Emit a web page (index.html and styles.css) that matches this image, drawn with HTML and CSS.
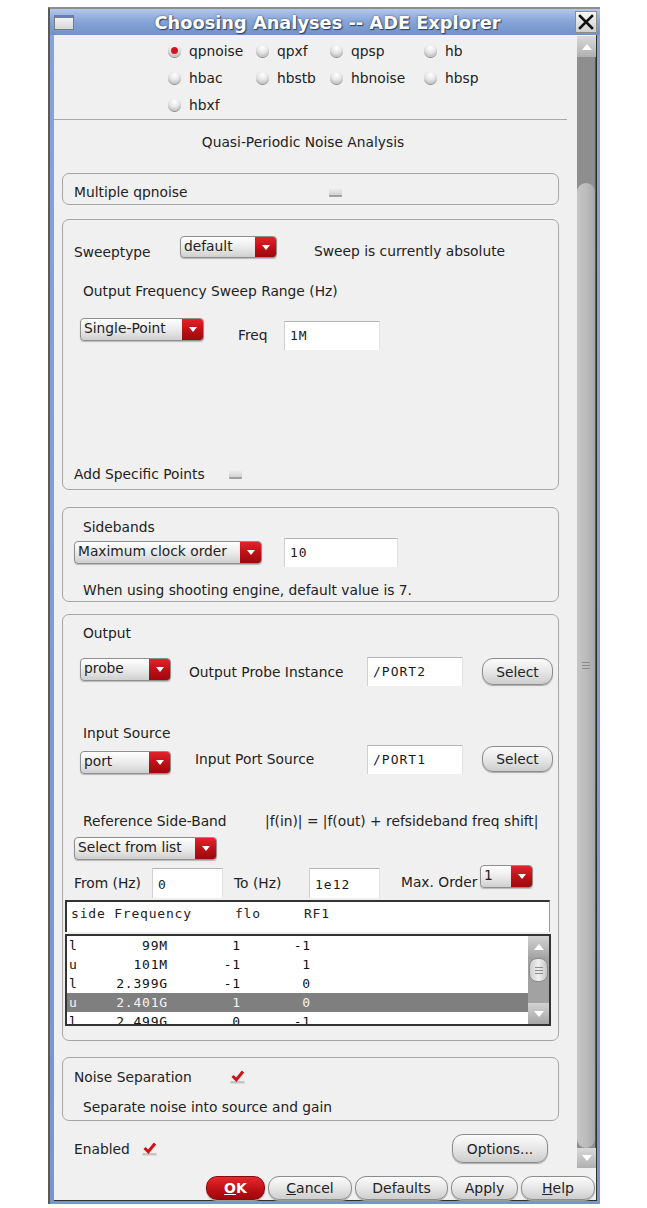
FILE: index.html
```html
<!DOCTYPE html>
<html>
<head>
<meta charset="utf-8">
<link rel="stylesheet" href="styles.css">
</head>
<body>
<div class="window">
  <div class="titlebar">
    <span class="win-icon"></span>
    <span class="title">Choosing Analyses -- ADE Explorer</span>
    <span class="close"><svg width="20" height="20" viewBox="0 0 20 20"><path d="M4 4 L16 16 M16 4 L4 16" stroke="#111" stroke-width="2.6" stroke-linecap="square"/></svg></span>
  </div>
  <div class="client">
    <div class="scrollarea">
      <div class="pane">
        <div class="radios">
          <label class="radio"><span class="rb on"></span>qpnoise</label>
          <label class="radio"><span class="rb"></span>qpxf</label>
          <label class="radio"><span class="rb"></span>qpsp</label>
          <label class="radio"><span class="rb"></span>hb</label>
          <label class="radio"><span class="rb"></span>hbac</label>
          <label class="radio"><span class="rb"></span>hbstb</label>
          <label class="radio"><span class="rb"></span>hbnoise</label>
          <label class="radio"><span class="rb"></span>hbsp</label>
          <label class="radio"><span class="rb"></span>hbxf</label>
        </div>
        <div class="sep"></div>
        <div class="heading">Quasi-Periodic Noise Analysis</div>

        <div class="group g1">
          <span class="lbl w-mq">Multiple qpnoise</span>
          <span class="cb"></span>
        </div>

        <div class="group g2">
          <div class="row r-sweep">
            <span class="lbl w-sweep">Sweeptype</span>
            <div class="combo c-default"><span class="ctext">default</span><span class="cbtn"></span></div>
            <span class="lbl sweep-note">Sweep is currently absolute</span>
          </div>
          <div class="lbl sub r-range">Output Frequency Sweep Range (Hz)</div>
          <div class="row r-freq">
            <div class="combo c-single"><span class="ctext">Single-Point</span><span class="cbtn"></span></div>
            <span class="lbl freq-lbl">Freq</span>
            <div class="field f-freq">1M</div>
          </div>
          <div class="row r-add">
            <span class="lbl w-add">Add Specific Points</span>
            <span class="cb"></span>
          </div>
        </div>

        <div class="group g3">
          <div class="lbl sub r-side">Sidebands</div>
          <div class="row r-max">
            <div class="combo c-max"><span class="ctext">Maximum clock order</span><span class="cbtn"></span></div>
            <div class="field f-max">10</div>
          </div>
          <div class="lbl sub r-when">When using shooting engine, default value is 7.</div>
        </div>

        <div class="group g4">
          <div class="lbl sub r-out">Output</div>
          <div class="row r-probe">
            <div class="combo c-small c-probe"><span class="ctext">probe</span><span class="cbtn"></span></div>
            <span class="lbl w-probe">Output Probe Instance</span>
            <div class="field f-port">/PORT2</div>
            <div class="btn b-select">Select</div>
          </div>
          <div class="lbl sub r-in">Input Source</div>
          <div class="row r-port">
            <div class="combo c-small c-port"><span class="ctext">port</span><span class="cbtn"></span></div>
            <span class="lbl w-portsrc">Input Port Source</span>
            <div class="field f-port">/PORT1</div>
            <div class="btn b-select b-sel2">Select</div>
          </div>
          <div class="row r-ref">
            <span class="lbl w-ref">Reference Side-Band</span>
            <span class="lbl">|f(in)| = |f(out) + refsideband freq shift|</span>
          </div>
          <div class="combo c-list"><span class="ctext">Select from list</span><span class="cbtn"></span></div>
          <div class="row r-range2">
            <span class="lbl w-from">From (Hz)</span>
            <div class="field f-num">0</div>
            <span class="lbl w-to">To (Hz)</span>
            <div class="field f-num">1e12</div>
            <span class="lbl w-ord">Max. Order</span>
            <div class="combo c-ord"><span class="ctext">1</span><span class="cbtn"></span></div>
          </div>
          <div class="thead">side Frequency     flo     RF1</div>
          <div class="list">
            <div class="rows">
              <div class="trow"><span>l</span><span>99M</span><span>1</span><span>-1</span></div>
              <div class="trow"><span>u</span><span>101M</span><span>-1</span><span>1</span></div>
              <div class="trow"><span>l</span><span>2.399G</span><span>-1</span><span>0</span></div>
              <div class="trow sel"><span>u</span><span>2.401G</span><span>1</span><span>0</span></div>
              <div class="trow"><span>l</span><span>2.499G</span><span>0</span><span>-1</span></div>
            </div>
            <div class="lscroll">
              <div class="lbtn up"></div>
              <div class="ltrack"><div class="lthumb"><span></span><span></span><span></span></div></div>
              <div class="lbtn down"></div>
            </div>
          </div>
        </div>

        <div class="group g5">
          <div class="row r-noise">
            <span class="lbl w-noise">Noise Separation</span>
            <span class="ck"><svg width="15" height="14" viewBox="0 0 15 14"><rect x="0.5" y="11" width="14" height="2.5" fill="#c4c4c4"/><path d="M2.5 6 L6.3 9.8 L13 1.5" fill="none" stroke="#d0121a" stroke-width="3"/></svg></span>
          </div>
          <div class="lbl sub r-sep">Separate noise into source and gain</div>
        </div>

        <div class="row r-enabled">
          <span class="lbl w-en">Enabled</span>
          <span class="ck"><svg width="15" height="14" viewBox="0 0 15 14"><rect x="0.5" y="11" width="14" height="2.5" fill="#c4c4c4"/><path d="M2.5 6 L6.3 9.8 L13 1.5" fill="none" stroke="#d0121a" stroke-width="3"/></svg></span>
          <div class="btn b-options">Options...</div>
        </div>
      </div>
      <div class="vscroll">
        <div class="vbtn up"></div>
        <div class="vtrack"><div class="vthumb"><span></span><span></span><span></span></div></div>
        <div class="vbtn down"></div>
      </div>
    </div>
    <div class="buttonbar">
      <div class="btn bb b-ok"><u>O</u>K</div>
      <div class="btn bb b-cancel"><u>C</u>ancel</div>
      <div class="btn bb b-defaults">Defaults</div>
      <div class="btn bb b-apply">Apply</div>
      <div class="btn bb b-help"><u>H</u>elp</div>
    </div>
  </div>
</div>
</body>
</html>
```

FILE: styles.css
```css
* { box-sizing: border-box; }
html, body { margin: 0; padding: 0; background: #ffffff; }
body { font-family: "DejaVu Sans", sans-serif; font-size: 13.8px; color: #222222; }

.window {
  margin: 7px 0 0 48px;
  width: 552px;
  border-top: 2px solid #8e8e8e;
  border-left: 2px solid #5a5a5a;
  background: linear-gradient(#86a4d6, #7896cc);
  padding-bottom: 3px;
}
.titlebar {
  height: 26px;
  display: flex;
  align-items: center;
  background: linear-gradient(#b3c8ea, #88a6d8 45%, #7092ca);
  position: relative;
}
.win-icon {
  width: 20px; height: 15px; margin-left: 4px;
  border: 1px solid #7a7a7a;
  border-top: 3px solid #6c7fa8;
  background: linear-gradient(#f2f2f2, #d6d6d6);
}
.title {
  flex: 1;
  text-align: center;
  color: #fff;
  font-weight: bold;
  font-size: 17.8px;
  text-shadow: 1px 1px 1px #2e3f60, 0 0 2px #3b4e76;
  padding-left: 6px;
}
.close {
  width: 22px; height: 22px; margin-right: 3px;
  border: 1px solid #8d8d8d;
  background: linear-gradient(#f7f7f7, #cfcfcf);
  display: flex; align-items: center; justify-content: center;
}

.client {
  margin: 0 3px 0 4px;
  background: #f0f0f0;
  border-right: 1px solid #2e2e2e;
  border-bottom: 1px solid #2e2e2e;
}
.scrollarea { display: flex; height: 1135px; }
.pane { width: 523px; flex: none; }

.lbl { white-space: nowrap; line-height: 16px; }

/* radios */
.radios {
  display: grid;
  grid-template-columns: 88px 74px 94px auto;
  grid-auto-rows: 27px;
  margin-left: 114px;
  padding-top: 2px;
  width: max-content;
}
.radio { display: flex; align-items: center; gap: 8px; }
.rb {
  width: 13px; height: 13px; border-radius: 50%;
  background: radial-gradient(circle at 50% 30%, #ffffff 0%, #e6e6e6 45%, #a4a4a4 100%);
  box-shadow: 0 1px 0 #8a8a8a;
  position: relative;
}
.rb.on::after {
  content: ""; position: absolute; left: 3px; top: 3px;
  width: 7px; height: 7px; border-radius: 50%;
  background: #d4141c;
}
.sep { height: 1px; background: #a9a9a9; margin: 1px 10px 0 0; }
.heading { height: 44px; line-height: 44px; text-align: center; padding-right: 25px; }

/* groups */
.group {
  margin-left: 8px;
  width: 497px;
  border: 1px solid #a6a6a6;
  border-radius: 7px;
  padding-left: 11px;
}
.row { display: flex; align-items: flex-start; }
.sub { margin-left: 9px; }

.cb {
  width: 13px; height: 10px;
  background: linear-gradient(#f4f4f4, #d2d2d2);
  border-bottom: 2px solid #a0a0a0;
  border-radius: 1px;
}
.ck { display: flex; }

/* combo */
.combo {
  display: flex;
  height: 23px;
  border: 1px solid #8e8e8e;
  border-radius: 4px;
  overflow: hidden;
  background: linear-gradient(#ffffff, #e9e9e9 55%, #cfcfcf);
  box-shadow: 0 1px 1px #b9b9b9;
}
.ctext { flex: 1; padding-left: 3px; line-height: 19px; white-space: nowrap; overflow: hidden; }
.cbtn {
  width: 21px; flex: none;
  background: linear-gradient(#e3222a, #b80e14 60%, #9b0a0e);
  display: flex; align-items: center; justify-content: center;
}
.cbtn::after {
  content: "";
  border-left: 4px solid transparent;
  border-right: 4px solid transparent;
  border-top: 5px solid #ffffff;
}

/* fields */
.field {
  height: 29px;
  background: #ffffff;
  border-top: 1px solid #b5b5b5;
  border-left: 1px solid #d0d0d0;
  border-right: 1px solid #e2e2e2;
  font-family: "DejaVu Sans Mono", monospace;
  font-size: 13px;
  letter-spacing: 1px;
  color: #1a1a1a;
  padding: 6px 0 0 5px;
  line-height: 16px;
}

/* buttons */
.btn {
  display: flex; align-items: center; justify-content: center;
  border: 1px solid #8c8c8c;
  border-radius: 11px;
  background: linear-gradient(#fbfbfb, #e7e7e7 50%, #cdcdcd);
  box-shadow: 0 1px 1px #a9a9a9;
  white-space: nowrap;
}

/* group 1 */
.g1 { margin-top: 9px; height: 32px; display: flex; align-items: center; padding-top: 5px; }
.w-mq { width: 255px; }

/* group 2 */
.g2 { margin-top: 14px; height: 271px; display: flex; flex-direction: column; padding-top: 16px; }
.w-sweep { width: 106px; margin-top: 8px; }
.c-default { width: 97px; height: 22px; }
.sweep-note { margin-left: 37px; margin-top: 7px; }
.r-range { margin-top: 23px; }
.r-freq { margin-top: 19px; margin-left: 6px; }
.c-single { width: 124px; }
.freq-lbl { margin-left: 34px; margin-top: 9px; width: 46px; }
.f-freq { width: 96px; margin-top: 3px; }
.r-add { margin-top: auto; margin-bottom: 7px; align-items: center; }
.w-add { width: 155px; }

/* group 3 */
.g3 { margin-top: 17px; height: 95px; padding-top: 11px; }
.r-max { margin-top: 3px; align-items: center; }
.c-max { width: 188px; }
.f-max { width: 114px; margin-left: 22px; }
.r-when { margin-top: 15px; }

/* group 4 */
.g4 { margin-top: 12px; height: 427px; padding-top: 10px; }
.r-probe { margin-top: 16px; margin-left: 6px; }
.c-small { width: 91px; }
.c-probe { margin-top: 1px; }
.w-probe { width: 178px; margin-left: 18px; margin-top: 7px; }
.f-port { width: 96px; }
.b-select { width: 71px; height: 27px; margin-left: 19px; margin-top: 1px; }
.b-sel2 { height: 26px; }
.r-in { margin-top: 39px; }
.r-port { margin-top: 4px; margin-left: 6px; }
.c-port { margin-top: 6px; }
.w-portsrc { width: 172px; margin-left: 24px; margin-top: 6px; }
.r-ref { margin-top: 39px; margin-left: 9px; }
.w-ref { width: 182px; }
.c-list { width: 143px; margin-top: 8px; }
.r-range2 { margin-top: 5px; }
.w-from { width: 78px; margin-top: 10px; }
.f-num { width: 71px; height: 30px; margin-top: 3px; padding-top: 8px; }
.w-to { width: 75px; margin-left: 11px; margin-top: 10px; }
.w-ord { width: 79px; margin-left: 21px; margin-top: 9px; }
.c-ord { width: 53px; }

.thead {
  margin: 2px 0 0 -9px;
  width: 485px; height: 32px;
  background: #ffffff;
  border-top: 2px solid #333;
  border-left: 2px solid #333;
  border-right: 1px solid #9a9a9a;
  font-family: "DejaVu Sans Mono", monospace;
  font-size: 13px;
  letter-spacing: 0.8px;
  white-space: pre;
  padding: 4px 0 0 4px;
  line-height: 16px;
}
.list {
  margin: 2px 0 0 -9px;
  width: 486px; height: 92px;
  border: 2px solid #333;
  background: #fff;
  display: flex;
  overflow: hidden;
}
.rows { flex: 1; }
.trow {
  display: grid;
  grid-template-columns: 32px 67px 73px 70px;
  height: 19px; line-height: 19px;
  padding-left: 2px;
  font-family: "DejaVu Sans Mono", monospace;
  font-size: 13px;
  letter-spacing: 0.8px;
  color: #111;
}
.trow span:not(:first-child) { text-align: right; }
.trow.sel { background: #7f7f7f; color: #f4f4f4; }
.lscroll { width: 21px; display: flex; flex-direction: column; background: #a2a2a2; }
.lbtn { height: 21px; background: linear-gradient(#d2d2d2, #a6a6a6); display: flex; align-items: center; justify-content: center; }
.lbtn.up::after { content: ""; border-left: 5px solid transparent; border-right: 5px solid transparent; border-bottom: 6px solid #fff; }
.lbtn.down::after { content: ""; border-left: 5px solid transparent; border-right: 5px solid transparent; border-top: 6px solid #fff; }
.ltrack { flex: 1; padding: 1px 1px 0 1px; }
.lthumb {
  height: 24px; border-radius: 8px; border: 1px solid #8a8a8a;
  background: linear-gradient(90deg, #cfcfcf, #eeeeee 50%, #c4c4c4);
  display: flex; flex-direction: column; align-items: center; justify-content: center; gap: 2px;
}
.lthumb span, .vthumb span { width: 8px; height: 1px; background: #8c8c8c; }

/* group 5 */
.g5 { margin-top: 16px; height: 64px; padding-top: 11px; }
.w-noise { width: 156px; }
.r-noise { align-items: center; }
.r-sep { margin-top: 14px; }

.r-enabled { margin-top: 13px; margin-left: 20px; align-items: center; }
.w-en { width: 68px; }
.b-options { width: 96px; height: 29px; margin-left: auto; margin-right: 29px; }

/* main scrollbar */
.vscroll { width: 19px; display: flex; flex-direction: column; padding-top: 1px; padding-bottom: 2px; }
.vbtn { height: 21px; background: linear-gradient(#d9d9d9, #b0b0b0); display: flex; align-items: center; justify-content: center; }
.vbtn.down { height: 20px; }
.vbtn.up::after { content: ""; border-left: 5px solid transparent; border-right: 5px solid transparent; border-bottom: 6px solid #fff; }
.vbtn.down::after { content: ""; border-left: 5px solid transparent; border-right: 5px solid transparent; border-top: 6px solid #fff; }
.vtrack { flex: 1; background: #8e8e8e; display: flex; flex-direction: column; padding-top: 126px; border-right: 1px solid #555; }
.vthumb {
  flex: 1;
  border-radius: 9px;
  background: linear-gradient(90deg, #c6c6c6, #b9b9b9 60%, #a7a7a7);
  display: flex; flex-direction: column; align-items: center; justify-content: center; gap: 2px;
}

/* bottom bar */
.buttonbar {
  height: 30px;
  display: flex;
  justify-content: flex-end;
  align-items: flex-start;
  gap: 3px;
  padding: 6px 1px 0 0;
}
.bb { height: 24px; font-size: 14px; }
.bb u { text-decoration-thickness: 1px; }
.b-ok {
  width: 59px; color: #fff; font-weight: bold;
  background: linear-gradient(#e32a2f, #bf1016 55%, #9c080c);
  border-color: #8a0a0e;
}
.b-cancel { width: 84px; }
.b-defaults { width: 93px; }
.b-apply { width: 67px; }
.b-help { width: 74px; }
```
